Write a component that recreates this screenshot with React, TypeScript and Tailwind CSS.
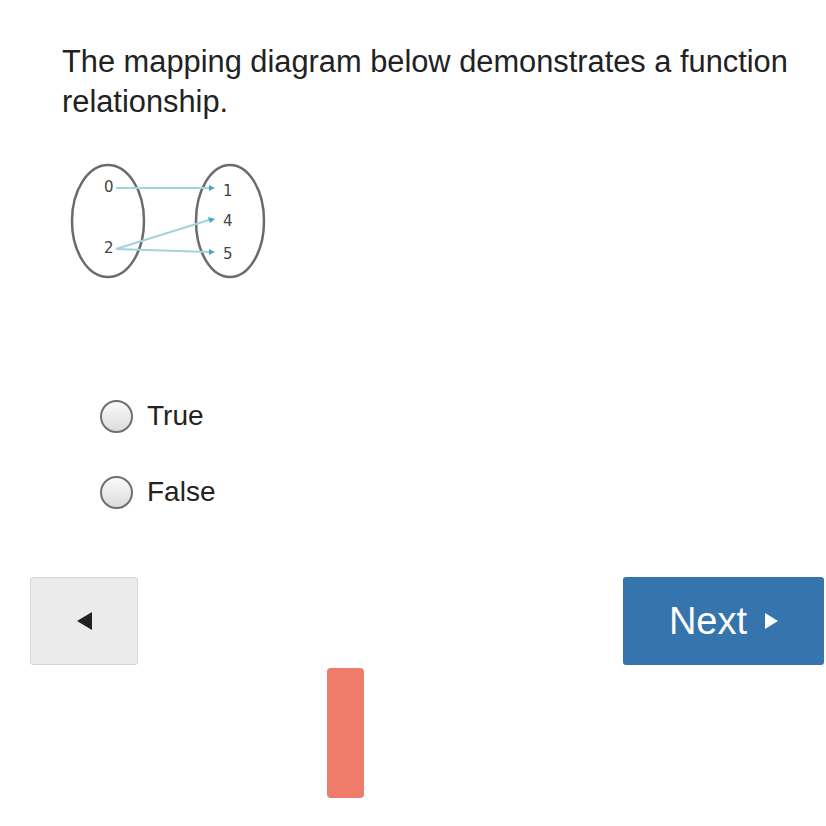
import React from 'react';

/* Mapping diagram: two ovals with arrows */
function MappingDiagram() {
  const line = '#a3d3dc';
  const arrow = '#4aa6c8';
  return (
    <svg width="220" height="130" viewBox="0 0 220 130" className="block">
      <ellipse cx="48" cy="64" rx="36" ry="56" fill="none" stroke="#6b6b6b" strokeWidth="2.5" />
      <ellipse cx="170" cy="64" rx="34" ry="56" fill="none" stroke="#6b6b6b" strokeWidth="2.5" />
      <line x1="56" y1="31" x2="149" y2="31" stroke={line} strokeWidth="2" />
      <line x1="56" y1="92" x2="149" y2="63" stroke={line} strokeWidth="2" />
      <line x1="56" y1="92" x2="149" y2="95" stroke={line} strokeWidth="2" />
      <polygon points="149,28 155,31 149,34" fill={arrow} />
      <polygon points="148,60 155,62 150,66" fill={arrow} />
      <polygon points="149,92 155,95 149,98" fill={arrow} />
      <g fontFamily="'DejaVu Sans', sans-serif" fontSize="15" fill="#444">
        <text x="44" y="35">0</text>
        <text x="44" y="96">2</text>
        <text x="163" y="39">1</text>
        <text x="163" y="69">4</text>
        <text x="163" y="102">5</text>
      </g>
    </svg>
  );
}

function RadioOption({ label }: { label: string }) {
  return (
    <label className="flex items-center gap-[14px] cursor-pointer">
      <span className="w-[33px] h-[33px] rounded-full border-2 border-[#6f6f6f] bg-gradient-to-b from-[#fafafa] to-[#dcdcdc]" />
      <span className="text-[28px] text-[#222]">{label}</span>
    </label>
  );
}

export default function App() {
  return (
    <div className="w-[826px] h-[826px] bg-white overflow-hidden" style={{ fontFamily: "'Liberation Sans', Arial, sans-serif" }}>
      <p className="pt-[42px] pl-[62px] pr-[20px] text-[30.8px] leading-[40px] text-[#222]">
        The mapping diagram below demonstrates a function relationship.
      </p>

      <div className="pl-[60px] mt-[35px]">
        <MappingDiagram />
      </div>

      <div className="pl-[100px] mt-[108px] flex flex-col gap-[34px]">
        <RadioOption label="True" />
        <RadioOption label="False" />
      </div>

      <div className="mt-[64px] pl-[30px] pr-[2px] flex justify-between">
        <button className="w-[108px] h-[88px] rounded-[3px] bg-[#ebebeb] border border-[#d6d6d6] flex items-center justify-center">
          <span className="w-0 h-0 border-y-[9px] border-y-transparent border-r-[15px] border-r-[#222]" />
        </button>
        <button className="w-[201px] h-[88px] rounded-[3px] bg-[#3674ad] text-white flex items-center justify-center gap-[18px]">
          <span className="text-[38px]">Next</span>
          <span className="w-0 h-0 border-y-[8px] border-y-transparent border-l-[13px] border-l-white" />
        </button>
      </div>

      <div className="mt-[3px] ml-[327px] w-[37px] h-[130px] rounded-[4px] bg-[#ef7b6b]" />
    </div>
  );
}
